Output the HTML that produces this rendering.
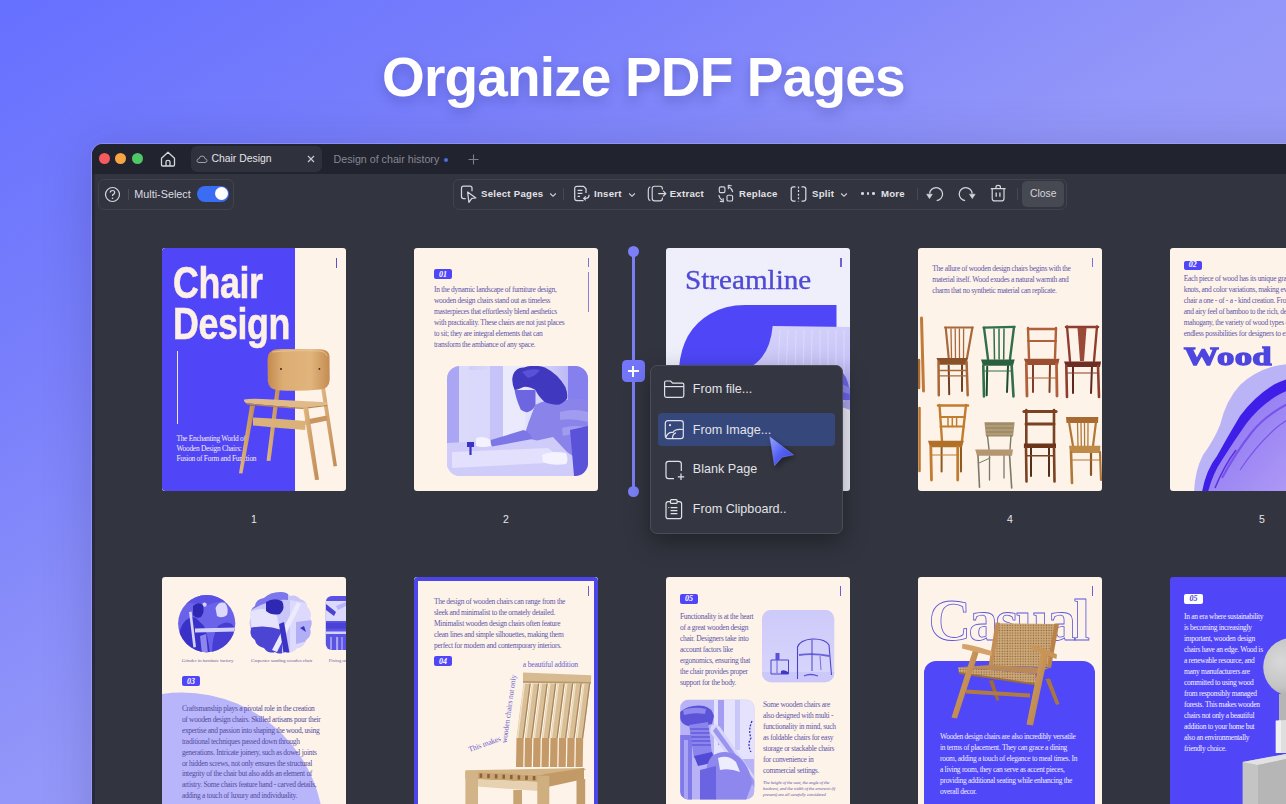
<!DOCTYPE html>
<html><head><meta charset="utf-8"><title>Organize PDF Pages</title>
<style>
html,body{margin:0;padding:0}
body{width:1286px;height:804px;overflow:hidden;position:relative;background:linear-gradient(to bottom right,#6670ff 0%,#7a80fb 25%,#9397f9 50%,#aaa6f0 100%);font-family:"Liberation Sans",sans-serif}
.t{position:absolute;white-space:nowrap}
</style></head><body>
<div class="t" style="left:382px;top:49.94px;font-size:55px;line-height:55px;color:#ffffff;font-weight:bold;font-family:'Liberation Sans',sans-serif;letter-spacing:-0.85px;text-shadow:0 5px 12px rgba(40,40,120,0.28);">Organize PDF Pages</div>
<div style="position:absolute;left:92px;top:143.6px;width:1250px;height:720px;border-radius:11px;background:#32343f;overflow:hidden;box-shadow:0 0 0 1px rgba(190,190,255,0.35), 0 6px 50px rgba(30,30,90,0.22)"><div style="position:absolute;left:0;top:0;width:100%;height:30.4px;background:#21232e"></div><div style="position:absolute;left:0;top:30.4px;width:2.5px;height:100%;background:#27293c"></div></div>
<div style="position:absolute;left:99.3px;top:153.2px;width:11px;height:11px;border-radius:50%;background:#f65a5c"></div>
<div style="position:absolute;left:115.3px;top:153.2px;width:11px;height:11px;border-radius:50%;background:#f6a545"></div>
<div style="position:absolute;left:131.5px;top:153.2px;width:11px;height:11px;border-radius:50%;background:#4fc766"></div>
<svg style="position:absolute;left:159px;top:150px" width="18" height="18" viewBox="0 0 18 18"><path d="M2.5 8.2 L9 2.3 L15.5 8.2 V14.8 Q15.5 16 14.3 16 H3.7 Q2.5 16 2.5 14.8 Z" fill="none" stroke="#d6d7dc" stroke-width="1.3" stroke-linejoin="round"/><path d="M7 16 V11.8 Q7 10.3 9 10.3 Q11 10.3 11 11.8 V16" fill="none" stroke="#d6d7dc" stroke-width="1.3"/></svg>
<div style="position:absolute;left:191px;top:146px;width:131px;height:26px;border-radius:6px;background:#2f313c"></div>
<svg style="position:absolute;left:196px;top:153px" width="12" height="12" viewBox="0 0 12 12"><path d="M3 9.5 H9 Q11 9.5 11 7.6 Q11 5.8 9.2 5.8 Q8.8 3 6 3 Q3.5 3 3.2 5.6 Q1 5.8 1 7.6 Q1 9.5 3 9.5 Z" fill="none" stroke="#9fa1aa" stroke-width="1"/></svg>
<div class="t" style="left:211.5px;top:154.40px;font-size:10.4px;line-height:10.4px;color:#e4e4e8;font-weight:normal;font-family:'Liberation Sans',sans-serif;">Chair Design</div>
<svg style="position:absolute;left:306px;top:154px" width="10" height="10" viewBox="0 0 10 10"><path d="M2 2 L8 8 M8 2 L2 8" stroke="#c9cad0" stroke-width="1.2"/></svg>
<div class="t" style="left:333.5px;top:154.14px;font-size:10.7px;line-height:10.7px;color:#868893;font-weight:normal;font-family:'Liberation Sans',sans-serif;">Design of chair history</div>
<div style="position:absolute;left:444px;top:157.5px;width:4px;height:4px;border-radius:50%;background:#4a6fe0"></div>
<svg style="position:absolute;left:467px;top:153px" width="13" height="13" viewBox="0 0 13 13"><path d="M6.5 1.5 V11.5 M1.5 6.5 H11.5" stroke="#7d7f89" stroke-width="1.1"/></svg>
<div style="position:absolute;left:97.5px;top:178.5px;width:136px;height:31px;border-radius:6px;border:1px solid #41434d;box-sizing:border-box;background:#32343f"></div>
<svg style="position:absolute;left:104px;top:185.5px" width="17" height="17" viewBox="0 0 17 17"><circle cx="8.5" cy="8.5" r="7" fill="none" stroke="#d6d7dc" stroke-width="1.2"/><path d="M6.3 6.6 Q6.3 4.5 8.5 4.5 Q10.7 4.5 10.7 6.5 Q10.7 7.8 9.3 8.4 Q8.5 8.8 8.5 10" fill="none" stroke="#d6d7dc" stroke-width="1.2"/><circle cx="8.5" cy="12.2" r="0.8" fill="#d6d7dc"/></svg>
<div style="position:absolute;left:128px;top:188.5px;width:1px;height:11px;background:#4a4c56"></div>
<div class="t" style="left:134.3px;top:188.76px;font-size:10.8px;line-height:10.8px;color:#dcdce0;font-weight:normal;font-family:'Liberation Sans',sans-serif;">Multi-Select</div>
<div style="position:absolute;left:197px;top:185.5px;width:31.5px;height:16.5px;border-radius:9px;background:#3a6cf4"></div>
<div style="position:absolute;left:214.8px;top:187.2px;width:13px;height:13px;border-radius:50%;background:#ffffff"></div>
<div style="position:absolute;left:452.7px;top:178.7px;width:614px;height:31px;border-radius:6px;border:1px solid #41434d;box-sizing:border-box;background:#32343f"></div>
<svg style="position:absolute;left:458px;top:184px" width="20" height="20" viewBox="0 0 20 20"><path d="M7.7 14.6 H5.5 Q3.5 14.6 3.5 12.6 V4 Q3.5 2 5.5 2 H12 Q14 2 14 4 V7.3" fill="none" stroke="#d6d7dc" stroke-width="1.25"/><path d="M9.6 8 L17.9 14 L13.8 14.4 L10.9 18.3 Z" fill="none" stroke="#d6d7dc" stroke-width="1.25" stroke-linejoin="round"/></svg>
<div class="t" style="left:481px;top:189.07px;font-size:9.6px;line-height:9.6px;color:#e2e2e6;font-weight:bold;font-family:'Liberation Sans',sans-serif;letter-spacing:0.26px;">Select Pages</div>
<svg style="position:absolute;left:548.5px;top:192px" width="8" height="6" viewBox="0 0 8 6"><path d="M1.2 1.5 L4 4.3 L6.8 1.5" fill="none" stroke="#d6d7dc" stroke-width="1.1"/></svg>
<div style="position:absolute;left:563px;top:188px;width:1px;height:12px;background:#464852"></div>
<svg style="position:absolute;left:572px;top:184px" width="20" height="20" viewBox="0 0 20 20"><path d="M11.5 16.6 H5 Q2.7 16.6 2.7 14.3 V4.6 Q2.7 2.3 5 2.3 H11.6 L14 4.8 V9" fill="none" stroke="#d6d7dc" stroke-width="1.25"/><path d="M5.6 6.4 H10.4 M5.6 9.4 H10.4 M5.6 12.4 H8" stroke="#d6d7dc" stroke-width="1.25"/><path d="M17 10.8 Q17.3 14.4 13.5 14.4 H12" fill="none" stroke="#d6d7dc" stroke-width="1.25"/><path d="M13.8 12.4 L11.7 14.4 L13.8 16.4" fill="none" stroke="#d6d7dc" stroke-width="1.25"/></svg>
<div class="t" style="left:594px;top:189.07px;font-size:9.6px;line-height:9.6px;color:#e2e2e6;font-weight:bold;font-family:'Liberation Sans',sans-serif;letter-spacing:0.26px;">Insert</div>
<svg style="position:absolute;left:627.5px;top:192px" width="8" height="6" viewBox="0 0 8 6"><path d="M1.2 1.5 L4 4.3 L6.8 1.5" fill="none" stroke="#d6d7dc" stroke-width="1.1"/></svg>
<svg style="position:absolute;left:0;top:0" width="1286" height="804" viewBox="0 0 1286 804"><path d="M650.3 186.8 Q648.3 187.6 648.3 190 V197.4 Q648.3 199.8 650.3 200.6" fill="none" stroke="#d6d7dc" stroke-width="1.15"/><path d="M662.4 189.6 V188.6 Q662.4 186.2 660 186.2 H654.6 Q652.2 186.2 652.2 188.6 V198.4 Q652.2 200.8 654.6 200.8 H660 Q662.4 200.8 662.4 198.4 V197.4" fill="none" stroke="#d6d7dc" stroke-width="1.15"/><path d="M658.6 193.6 H665.8 M663.4 191.2 L665.9 193.6 L663.4 196" fill="none" stroke="#d6d7dc" stroke-width="1.15" stroke-linecap="round" stroke-linejoin="round"/></svg>
<div class="t" style="left:669.7px;top:189.07px;font-size:9.6px;line-height:9.6px;color:#e2e2e6;font-weight:bold;font-family:'Liberation Sans',sans-serif;letter-spacing:0.26px;">Extract</div>
<svg style="position:absolute;left:0;top:0" width="1286" height="804" viewBox="0 0 1286 804"><rect x="719.3" y="186.8" width="5.6" height="5.8" rx="1.3" fill="none" stroke="#d6d7dc" stroke-width="1.15"/><rect x="727" y="195.2" width="5.6" height="5.8" rx="1.3" fill="none" stroke="#d6d7dc" stroke-width="1.15"/><path d="M732.8 192.2 Q732 188.6 728.8 186.8" fill="none" stroke="#d6d7dc" stroke-width="1.1"/><path d="M728.2 185.3 L728.4 188.6 M728.2 185.3 L731.3 185.8" fill="none" stroke="#d6d7dc" stroke-width="1.1" stroke-linecap="round"/><path d="M718.8 195 Q719.4 198.6 722.6 200.4" fill="none" stroke="#d6d7dc" stroke-width="1.1"/><path d="M723.4 201.8 L723.1 198.6 M723.4 201.8 L720.3 201.4" fill="none" stroke="#d6d7dc" stroke-width="1.1" stroke-linecap="round"/></svg>
<div class="t" style="left:739px;top:189.07px;font-size:9.6px;line-height:9.6px;color:#e2e2e6;font-weight:bold;font-family:'Liberation Sans',sans-serif;letter-spacing:0.26px;">Replace</div>
<svg style="position:absolute;left:789px;top:184px" width="20" height="20" viewBox="0 0 20 20"><path d="M6.5 2.8 H4.4 Q2.2 2.8 2.2 5 V14.8 Q2.2 17 4.4 17 H6.5" fill="none" stroke="#d6d7dc" stroke-width="1.25"/><path d="M12.5 2.8 H14.6 Q16.8 2.8 16.8 5 V14.8 Q16.8 17 14.6 17 H12.5" fill="none" stroke="#d6d7dc" stroke-width="1.25"/><path d="M9.5 2.5 V17.5" stroke="#d6d7dc" stroke-width="1.25" stroke-dasharray="2 1.6"/></svg>
<div class="t" style="left:812px;top:189.07px;font-size:9.6px;line-height:9.6px;color:#e2e2e6;font-weight:bold;font-family:'Liberation Sans',sans-serif;letter-spacing:0.26px;">Split</div>
<svg style="position:absolute;left:840px;top:192px" width="8" height="6" viewBox="0 0 8 6"><path d="M1.2 1.5 L4 4.3 L6.8 1.5" fill="none" stroke="#d6d7dc" stroke-width="1.1"/></svg>
<div style="position:absolute;left:861.2px;top:192.2px;width:2.6px;height:2.6px;border-radius:50%;background:#d6d7dc"></div>
<div style="position:absolute;left:866.7px;top:192.2px;width:2.6px;height:2.6px;border-radius:50%;background:#d6d7dc"></div>
<div style="position:absolute;left:872.2px;top:192.2px;width:2.6px;height:2.6px;border-radius:50%;background:#d6d7dc"></div>
<div class="t" style="left:881px;top:189.07px;font-size:9.6px;line-height:9.6px;color:#e2e2e6;font-weight:bold;font-family:'Liberation Sans',sans-serif;letter-spacing:0.26px;">More</div>
<div style="position:absolute;left:917px;top:188px;width:1px;height:12px;background:#464852"></div>
<svg style="position:absolute;left:0;top:0" width="1286" height="804" viewBox="0 0 1286 804"><path d="M936.7 200.6 A6.5 6.5 0 1 0 929.6 193.6" fill="none" stroke="#d6d7dc" stroke-width="1.25"/><path d="M926.7 194.2 L932.3 194.2 L929.5 198.6 Z" fill="#d6d7dc" stroke="#d6d7dc" stroke-width="0.6" stroke-linejoin="round"/><path d="M965.1 200.6 A6.5 6.5 0 1 1 972.2 193.6" fill="none" stroke="#d6d7dc" stroke-width="1.25"/><path d="M969.5 194.2 L975.1 194.2 L972.3 198.6 Z" fill="#d6d7dc" stroke="#d6d7dc" stroke-width="0.6" stroke-linejoin="round"/><path d="M990.8 188.6 H1005.6 M996 188.4 V187.2 Q996 185.4 998.2 185.4 Q1000.4 185.4 1000.4 187.2 V188.4" fill="none" stroke="#d6d7dc" stroke-width="1.2"/><path d="M992.2 189 V198.4 Q992.2 200.9 994.7 200.9 H1001.5 Q1004 200.9 1004 198.4 V189" fill="none" stroke="#d6d7dc" stroke-width="1.2"/><path d="M996.2 192.4 V196.8 M999.9 192.4 V196.8" stroke="#d6d7dc" stroke-width="1.3"/></svg>
<div style="position:absolute;left:1016.5px;top:188px;width:1px;height:12px;background:#464852"></div>
<div style="position:absolute;left:1022px;top:181px;width:42px;height:25.5px;border-radius:5px;background:#464852"></div>
<div class="t" style="left:1030px;top:188.50px;font-size:10.4px;line-height:10.4px;color:#d4d5da;font-weight:normal;font-family:'Liberation Sans',sans-serif;">Close</div>
<div style="position:absolute;left:162px;top:248px;width:184px;height:243px;border-radius:3px;background:#fdf3e8;overflow:hidden"></div>
<div style="position:absolute;left:414px;top:248px;width:184px;height:243px;border-radius:3px;background:#fdf3e8;overflow:hidden"></div>
<div style="position:absolute;left:666px;top:248px;width:184px;height:243px;border-radius:3px;background:#efeffb;overflow:hidden"></div>
<div style="position:absolute;left:918px;top:248px;width:184px;height:243px;border-radius:3px;background:#fdf3e8;overflow:hidden"></div>
<div style="position:absolute;left:1170px;top:248px;width:184px;height:243px;border-radius:3px;background:#fdf3e8;overflow:hidden"></div>
<div style="position:absolute;left:162px;top:577px;width:184px;height:263px;border-radius:3px;background:#fdf3e8"></div>
<div style="position:absolute;left:414px;top:577px;width:184px;height:263px;border-radius:3px;background:#fdf3e8"></div>
<div style="position:absolute;left:666px;top:577px;width:184px;height:263px;border-radius:3px;background:#fdf3e8"></div>
<div style="position:absolute;left:918px;top:577px;width:184px;height:263px;border-radius:3px;background:#fdf3e8"></div>
<div style="position:absolute;left:1170px;top:577px;width:184px;height:263px;border-radius:3px;background:#5046f8"></div>
<div style="position:absolute;left:414px;top:577px;width:184px;height:260px;border-radius:4px;border:4.3px solid #4b45ea;box-sizing:border-box"></div>
<div class="t" style="left:251px;top:514.31px;font-size:10.5px;line-height:10.5px;color:#e6e6ea;font-weight:normal;font-family:'Liberation Sans',sans-serif;width:6px;text-align:center;">1</div>
<div class="t" style="left:503px;top:514.31px;font-size:10.5px;line-height:10.5px;color:#e6e6ea;font-weight:normal;font-family:'Liberation Sans',sans-serif;width:6px;text-align:center;">2</div>
<div class="t" style="left:1007px;top:514.31px;font-size:10.5px;line-height:10.5px;color:#e6e6ea;font-weight:normal;font-family:'Liberation Sans',sans-serif;width:6px;text-align:center;">4</div>
<div class="t" style="left:1259px;top:514.31px;font-size:10.5px;line-height:10.5px;color:#e6e6ea;font-weight:normal;font-family:'Liberation Sans',sans-serif;width:6px;text-align:center;">5</div>
<div style="position:absolute;left:162px;top:248px;width:184px;height:243px;overflow:hidden;border-radius:3px"><div style="position:absolute;left:-162px;top:-248px;width:1286px;height:804px"><div style="position:absolute;left:162px;top:248px;width:133.3px;height:243px;border-radius:3px 0 0 3px;background:#5046f8"></div>
<div class="t" style="left:173.2px;top:260.11px;font-size:45px;line-height:45px;color:#fdf0e8;font-weight:bold;font-family:'Liberation Sans',sans-serif;letter-spacing:-0.5px;transform:scaleX(0.795);transform-origin:0 0;-webkit-text-stroke:0.6px #fdf0e8;">Chair</div>
<div class="t" style="left:173.2px;top:300.51px;font-size:45px;line-height:45px;color:#fdf0e8;font-weight:bold;font-family:'Liberation Sans',sans-serif;letter-spacing:-0.5px;transform:scaleX(0.795);transform-origin:0 0;-webkit-text-stroke:0.6px #fdf0e8;">Design</div>
<div style="position:absolute;left:335.8px;top:257.5px;width:1.4px;height:10px;background:#5a50d0"></div>
<div style="position:absolute;left:177px;top:350.6px;width:1.3px;height:73px;background:#f3e6dc"></div>
<div class="t" style="left:176.4px;top:435.10px;font-size:7.4px;line-height:7.4px;color:#f6ece6;font-weight:normal;font-family:'Liberation Serif',serif;letter-spacing:-0.25px;">The Enchanting World of</div>
<div class="t" style="left:176.4px;top:445.20px;font-size:7.4px;line-height:7.4px;color:#f6ece6;font-weight:normal;font-family:'Liberation Serif',serif;letter-spacing:-0.25px;">Wooden Design Chairs:</div>
<div class="t" style="left:176.4px;top:455.30px;font-size:7.4px;line-height:7.4px;color:#f6ece6;font-weight:normal;font-family:'Liberation Serif',serif;letter-spacing:-0.25px;">Fusion of Form and Function</div>
<svg style="position:absolute;left:0;top:0" width="1286" height="804" viewBox="0 0 1286 804">
<defs><linearGradient id="wd1" x1="0" y1="0" x2="1" y2="0"><stop offset="0" stop-color="#c4894e"/><stop offset="0.25" stop-color="#dcae74"/><stop offset="0.7" stop-color="#e0b47c"/><stop offset="1" stop-color="#c48c52"/></linearGradient>
<linearGradient id="lg1" x1="0" y1="0" x2="1" y2="0"><stop offset="0" stop-color="#e2b882"/><stop offset="1" stop-color="#bf8a54"/></linearGradient></defs>
<path d="M275.6 388.7 L280 388.5 L270.5 461 L266.6 460.8 Z" fill="url(#lg1)"/>
<path d="M321 387.8 L325 387.6 L337 466 L333.5 466.4 Z" fill="url(#lg1)"/>
<path d="M272 351 Q273 349 282 349 L320 349.3 Q329 349.5 329.5 356 L329.7 380 Q329 389 320 389.5 Q300 391.5 278 390.2 Q268.5 389.5 267.8 381 L267.5 360 Q267.8 352 272 351 Z" fill="url(#wd1)"/>
<path d="M272 352 Q290 350 320 351 Q326 352 327 356" fill="none" stroke="#ebc896" stroke-width="0.8"/>
<circle cx="281" cy="368.9" r="1" fill="#3b2a1a"/><circle cx="319.4" cy="368.9" r="0.9" fill="#3b2a1a"/>
<path d="M305 419.8 L327 415.6 L327.5 420.5 L305.5 425 Z" fill="#c99660"/>
<path d="M253 417.5 Q280 419 305.3 421 L305.3 430 Q280 428.5 253 425.5 Z" fill="#dbb17a"/>
<path d="M244 399.5 Q250 398.5 262 399 L327 402.2 L327 405 Q315 406 303.5 407.6 Q270 406 246 403 Q243.5 401.5 244 399.5 Z" fill="#e0ba88"/>
<path d="M246 403 Q270 406 303.5 407.6 L327 405 L327 406 Q315 407.5 303.5 409 Q270 407.5 247 404.5 Z" fill="#b98652"/>
<path d="M250 405.5 L255 405.8 L242.5 473.5 L239 473.2 Z" fill="url(#lg1)"/>
<path d="M303 406.5 L308 406.8 L319 479.8 L315 480 Z" fill="url(#lg1)"/>
</svg></div></div>
<div style="position:absolute;left:414px;top:248px;width:184px;height:243px;overflow:hidden;border-radius:3px"><div style="position:absolute;left:-414px;top:-248px;width:1286px;height:804px"><div style="position:absolute;left:434px;top:269.4px;width:18px;height:10px;border-radius:2px;background:#5046f8"></div><div class="t" style="left:438.0px;top:270.80px;font-size:8px;line-height:8px;color:#ffffff;font-weight:bold;font-family:'Liberation Serif',serif;width:10px;text-align:center;font-style:italic;">01</div>
<div class="t" style="left:434px;top:285.92px;font-size:7.5px;line-height:7.5px;color:#5f56a8;font-weight:normal;font-family:'Liberation Serif',serif;letter-spacing:-0.3px;">In the dynamic landscape of furniture design,</div>
<div class="t" style="left:434px;top:297.00px;font-size:7.5px;line-height:7.5px;color:#5f56a8;font-weight:normal;font-family:'Liberation Serif',serif;letter-spacing:-0.3px;">wooden design chairs stand out as timeless</div>
<div class="t" style="left:434px;top:308.08px;font-size:7.5px;line-height:7.5px;color:#5f56a8;font-weight:normal;font-family:'Liberation Serif',serif;letter-spacing:-0.3px;">masterpieces that effortlessly blend aesthetics</div>
<div class="t" style="left:434px;top:319.16px;font-size:7.5px;line-height:7.5px;color:#5f56a8;font-weight:normal;font-family:'Liberation Serif',serif;letter-spacing:-0.3px;">with practicality. These chairs are not just places</div>
<div class="t" style="left:434px;top:330.24px;font-size:7.5px;line-height:7.5px;color:#5f56a8;font-weight:normal;font-family:'Liberation Serif',serif;letter-spacing:-0.3px;">to sit; they are integral elements that can</div>
<div class="t" style="left:434px;top:341.32px;font-size:7.5px;line-height:7.5px;color:#5f56a8;font-weight:normal;font-family:'Liberation Serif',serif;letter-spacing:-0.3px;">transform the ambiance of any space.</div>
<div style="position:absolute;left:588.0px;top:257.5px;width:1.4px;height:9.5px;background:#7d72d8"></div>
<div style="position:absolute;left:588.0px;top:271.6px;width:1.4px;height:40px;background:#8a80dc"></div>
<svg style="position:absolute;left:0;top:0;pointer-events:none" width="1286" height="804" viewBox="0 0 1286 804"><defs><clipPath id="ph2"><rect x="447" y="366" width="141" height="110" rx="13"/></clipPath>
<linearGradient id="ph2bg" x1="0" y1="0" x2="1" y2="0"><stop offset="0" stop-color="#c8c5f8"/><stop offset="0.55" stop-color="#e6e5fc"/><stop offset="1" stop-color="#a9a5f3"/></linearGradient></defs><g clip-path="url(#ph2)">
<rect x="447" y="366" width="141" height="110" fill="url(#ph2bg)"/>
<rect x="447" y="366" width="12" height="80" fill="#aaa6f4"/>
<rect x="459" y="366" width="10" height="80" fill="#dcdafb"/>
<rect x="469" y="370" width="20" height="74" fill="#dad8fb"/>
<rect x="490" y="366" width="13" height="80" fill="#c6c3f8"/>
<rect x="503" y="366" width="22" height="76" fill="#ebeafd"/>
<rect x="568" y="366" width="20" height="38" fill="#8580ee"/>
<path d="M447 443 L588 436 L588 476 L447 476 Z" fill="#cfccf9"/>
<path d="M452 452 L548 448 L566 462 L452 468 Z" fill="#e2e0fc"/>
<path d="M467 442 h7 v5 h-2.4 v8 h-2.2 v-8 h-2.4 z" fill="#3a33c6"/>
<path d="M535.5 404.8 Q548 398 566 400 Q580 398 588 400 L588 466 Q576 458 567 452 L553 437 L537 440.6 L524 437.6 Q527 425 535.5 404.8 Z" fill="#8a84ea"/>
<path d="M560 412 Q574 408 588 412 L588 422 Q574 418 560 420 Z M562 428 Q576 424 588 428 L588 434 Q575 432 563 436 Z" fill="#a19cf0"/>
<path d="M570 430 L588 426 L588 476 L574 476 Q572 452 570 430 Z" fill="#5a52d8"/>
<path d="M489 440.6 L523.6 430 Q530 432 532.5 439 L492.2 446.6 Z" fill="#7d76e6"/>
<path d="M476 438 Q484 435 490.5 440 L491 446 Q483 448 476 446 Z" fill="#f3f2fe"/>
<path d="M542 455 Q552 450 566 453 Q569 460 566 464 Q552 466 543 462 Z" fill="#f3f2fe"/>
<path d="M514.6 389.9 Q516 399 520.6 409.3 Q524 413 528 412 Q534 410 535.5 404.8 L535.5 390 Z" fill="#6e66e0"/>
<path d="M513 375 Q516 367 524 367.5 Q534 364 545 367.5 Q558 374 565.4 387 Q568 394 566.9 398.8 Q562 405 556.4 404.8 Q548 404 544.5 401.8 Q538 396 535.5 390 Q528 386 523.6 387 Q517 390 514.6 389.9 Q511 382 513 375 Z" fill="#4038bf"/>
<path d="M522 372 Q530 368 540 370 Q536 376 528 378 Z" fill="#5a52d6"/>
</g></svg></div></div>
<div class="t" style="left:684.8px;top:267.01px;font-size:26.5px;line-height:26.5px;color:#4f49d4;font-weight:normal;font-family:'Liberation Serif',serif;letter-spacing:0px;transform:scaleX(1.1);transform-origin:0 0;-webkit-text-stroke:0.35px #4f49d4;">Streamline</div>
<div style="position:absolute;left:840.3px;top:257.5px;width:1.4px;height:9.5px;background:#6a62d6"></div>
<svg style="position:absolute;left:0;top:0;pointer-events:none" width="1286" height="804" viewBox="0 0 1286 804"><defs><clipPath id="p3"><rect x="666" y="248" width="184" height="243" rx="3"/></clipPath>
<linearGradient id="rib" x1="0" y1="0" x2="0.3" y2="1"><stop offset="0" stop-color="#d6d4fa"/><stop offset="0.6" stop-color="#c9c6f8"/><stop offset="1" stop-color="#b0abf3"/></linearGradient></defs><g clip-path="url(#p3)">
<path d="M679 368 Q682 330 710 314 Q725 305 745 305 L836.5 305 L836.5 420 L679 420 Z" fill="#4f47f7"/>
<path d="M772.7 326 L850 327 L850 410 Q820 400 790 384 Q770 372 752 366 Q770 355 772.7 326 Z" fill="url(#rib)"/>
<path d="M780 330 L778 370 M788 330 L786 374 M796 330 L795 378 M804 330 L803 382 M812 330 L811 386 M820 330 L820 390 M828 330 L828 394 M836 330 L836 398 M844 330 L844 402" stroke="#e2e0fc" stroke-width="1" opacity="0.7"/>
<path d="M842 372 Q850 380 850 400 L842 400 Z" fill="#6c66ee"/>
<path d="M842 384 L850 388 L850 394 L842 392 Z" fill="#8f8af2"/>
</g></svg>
<div style="position:absolute;left:918px;top:248px;width:184px;height:243px;overflow:hidden;border-radius:3px"><div style="position:absolute;left:-918px;top:-248px;width:1286px;height:804px"><div class="t" style="left:932.3px;top:265.42px;font-size:7.5px;line-height:7.5px;color:#5f56a8;font-weight:normal;font-family:'Liberation Serif',serif;letter-spacing:-0.3px;">The allure of wooden design chairs begins with the</div>
<div class="t" style="left:932.3px;top:276.32px;font-size:7.5px;line-height:7.5px;color:#5f56a8;font-weight:normal;font-family:'Liberation Serif',serif;letter-spacing:-0.3px;">material itself. Wood exudes a natural warmth and</div>
<div class="t" style="left:932.3px;top:287.22px;font-size:7.5px;line-height:7.5px;color:#5f56a8;font-weight:normal;font-family:'Liberation Serif',serif;letter-spacing:-0.3px;">charm that no synthetic material can replicate.</div>
<div style="position:absolute;left:1091.8999999999999px;top:257.5px;width:1.4px;height:9.5px;background:#7a6ee0"></div>
<svg style="position:absolute;left:0;top:0;pointer-events:none" width="1286" height="804" viewBox="0 0 1286 804"><defs><clipPath id="p4"><rect x="918" y="248" width="184" height="243" rx="3"/></clipPath></defs><g clip-path="url(#p4)"><line x1="921.5" y1="318" x2="923.5" y2="391" stroke="#c27a38" stroke-width="3" stroke-linecap="round"/><line x1="919" y1="360" x2="919" y2="388" stroke="#a86a30" stroke-width="2.5" stroke-linecap="round"/><line x1="919.5" y1="408" x2="919.5" y2="471" stroke="#b8742e" stroke-width="2.5" stroke-linecap="round"/><line x1="945.7" y1="327.5" x2="948.7" y2="358" stroke="#a8683a" stroke-width="2.2" stroke-linecap="round"/><line x1="972.4" y1="327.5" x2="967" y2="358" stroke="#a8683a" stroke-width="2.2" stroke-linecap="round"/><line x1="945" y1="327.5" x2="972.8" y2="327.5" stroke="#a8683a" stroke-width="2" stroke-linecap="round"/><line x1="951.0" y1="329" x2="951.5" y2="358" stroke="#a8683a" stroke-width="1.3" stroke-linecap="round"/><line x1="955.2" y1="329" x2="955.5" y2="358" stroke="#a8683a" stroke-width="1.3" stroke-linecap="round"/><line x1="959.4" y1="329" x2="959.5" y2="358" stroke="#a8683a" stroke-width="1.3" stroke-linecap="round"/><line x1="963.6" y1="329" x2="963.5" y2="358" stroke="#a8683a" stroke-width="1.3" stroke-linecap="round"/><line x1="948.7" y1="365.7" x2="949.2" y2="394.3" stroke="#6e4222" stroke-width="2" stroke-linecap="round"/><line x1="962" y1="365" x2="962" y2="391" stroke="#6e4222" stroke-width="2" stroke-linecap="round"/><polygon points="936.5,358 968,358 966,364.7 939,364.7" fill="#8a5028"/><line x1="938.5" y1="362" x2="938.8" y2="395.3" stroke="#a8683a" stroke-width="2.5" stroke-linecap="round"/><line x1="966.6" y1="362" x2="967.7" y2="395.3" stroke="#a8683a" stroke-width="2.5" stroke-linecap="round"/><line x1="939" y1="370.5" x2="966" y2="370.5" stroke="#a8683a" stroke-width="1.3" stroke-linecap="round"/><line x1="939" y1="375.8" x2="966" y2="375.8" stroke="#a8683a" stroke-width="1.3" stroke-linecap="round"/><line x1="984" y1="327.7" x2="988" y2="359" stroke="#2f7048" stroke-width="2.4" stroke-linecap="round"/><line x1="1014" y1="327" x2="1010" y2="359" stroke="#2f7048" stroke-width="2.4" stroke-linecap="round"/><line x1="983.5" y1="327.7" x2="1014.7" y2="326.8" stroke="#2f7048" stroke-width="2.2" stroke-linecap="round"/><line x1="994" y1="329" x2="994.5" y2="359" stroke="#2f7048" stroke-width="1.5" stroke-linecap="round"/><line x1="999" y1="329" x2="999.1" y2="359" stroke="#2f7048" stroke-width="1.5" stroke-linecap="round"/><line x1="1004" y1="329" x2="1003.7" y2="359" stroke="#2f7048" stroke-width="1.5" stroke-linecap="round"/><line x1="987.2" y1="366.8" x2="986.7" y2="395.3" stroke="#1f4a32" stroke-width="2" stroke-linecap="round"/><line x1="1008" y1="366" x2="1007" y2="392" stroke="#1f4a32" stroke-width="2" stroke-linecap="round"/><polygon points="981,359.4 1014.7,359.4 1013,365.7 983,365.7" fill="#2a6040"/><line x1="983.3" y1="365.7" x2="984" y2="396.4" stroke="#2f7048" stroke-width="2.6" stroke-linecap="round"/><line x1="1011.6" y1="364.7" x2="1013.5" y2="396.4" stroke="#2f7048" stroke-width="2.6" stroke-linecap="round"/><line x1="984" y1="371" x2="1012" y2="371" stroke="#2f7048" stroke-width="1.2" stroke-linecap="round"/><line x1="1028" y1="328" x2="1029" y2="358" stroke="#b2603a" stroke-width="2.4" stroke-linecap="round"/><line x1="1056" y1="328" x2="1055" y2="358" stroke="#b2603a" stroke-width="2.4" stroke-linecap="round"/><line x1="1028" y1="329" x2="1056" y2="329" stroke="#b2603a" stroke-width="2.5" stroke-linecap="round"/><line x1="1028" y1="341" x2="1056" y2="341" stroke="#b2603a" stroke-width="2.2" stroke-linecap="round"/><line x1="1033" y1="364" x2="1033" y2="392" stroke="#7e4026" stroke-width="2" stroke-linecap="round"/><line x1="1050" y1="364" x2="1049.5" y2="392" stroke="#7e4026" stroke-width="2" stroke-linecap="round"/><polygon points="1024,358.7 1059.5,358.7 1058,365 1026,365" fill="#9a5030"/><line x1="1026.3" y1="364" x2="1027" y2="396" stroke="#b2603a" stroke-width="2.8" stroke-linecap="round"/><line x1="1056.5" y1="364" x2="1057" y2="396" stroke="#b2603a" stroke-width="2.8" stroke-linecap="round"/><line x1="1027" y1="378" x2="1056" y2="378" stroke="#b2603a" stroke-width="1.2" stroke-linecap="round"/><line x1="1067" y1="326.5" x2="1070" y2="361" stroke="#8e3d2e" stroke-width="2.4" stroke-linecap="round"/><line x1="1097" y1="326.5" x2="1094" y2="361" stroke="#8e3d2e" stroke-width="2.4" stroke-linecap="round"/><line x1="1066" y1="327" x2="1098" y2="327" stroke="#8e3d2e" stroke-width="2.5" stroke-linecap="round"/><polygon points="1077.5,328 1086.5,328 1084,361 1080,361" fill="#9a4838"/><line x1="1073" y1="366" x2="1073" y2="393" stroke="#5e2820" stroke-width="2" stroke-linecap="round"/><line x1="1092" y1="366" x2="1091" y2="393" stroke="#5e2820" stroke-width="2" stroke-linecap="round"/><polygon points="1064,361.6 1101,361.6 1100,367 1066,367" fill="#6e2d22"/><line x1="1066.3" y1="366" x2="1067" y2="397" stroke="#8e3d2e" stroke-width="2.6" stroke-linecap="round"/><line x1="1098" y1="366" x2="1099" y2="397" stroke="#8e3d2e" stroke-width="2.6" stroke-linecap="round"/><line x1="1067" y1="373" x2="1098" y2="373" stroke="#8e3d2e" stroke-width="1.2" stroke-linecap="round"/><line x1="939.5" y1="405" x2="942" y2="441" stroke="#c27c30" stroke-width="2.4" stroke-linecap="round"/><line x1="966" y1="405" x2="962" y2="441" stroke="#c27c30" stroke-width="2.4" stroke-linecap="round"/><line x1="938" y1="405.5" x2="968" y2="405.5" stroke="#c27c30" stroke-width="2.5" stroke-linecap="round"/><line x1="940" y1="417" x2="965" y2="417" stroke="#c27c30" stroke-width="2" stroke-linecap="round"/><line x1="940.5" y1="426.5" x2="964" y2="426.5" stroke="#c27c30" stroke-width="2" stroke-linecap="round"/><line x1="948.0" y1="417" x2="948.0" y2="426.5" stroke="#c27c30" stroke-width="1.5" stroke-linecap="round"/><line x1="952.3" y1="417" x2="952.3" y2="426.5" stroke="#c27c30" stroke-width="1.5" stroke-linecap="round"/><line x1="956.6" y1="417" x2="956.6" y2="426.5" stroke="#c27c30" stroke-width="1.5" stroke-linecap="round"/><line x1="941.6" y1="447" x2="941.6" y2="471.5" stroke="#8e5a20" stroke-width="2" stroke-linecap="round"/><line x1="961" y1="447" x2="961" y2="471.5" stroke="#8e5a20" stroke-width="2" stroke-linecap="round"/><polygon points="928,440.8 963.8,440.8 962,447.2 930,447.2" fill="#b07028"/><line x1="930.8" y1="447" x2="931.5" y2="480" stroke="#c27c30" stroke-width="2.8" stroke-linecap="round"/><line x1="957.7" y1="447" x2="957.7" y2="480" stroke="#c27c30" stroke-width="2.8" stroke-linecap="round"/><line x1="932" y1="455" x2="958" y2="455" stroke="#c27c30" stroke-width="1.2" stroke-linecap="round"/><polygon points="984.5,422.2 1014.6,422.2 1013,436.5 986,436.5" fill="#a08c68"/><line x1="985" y1="426" x2="1014" y2="426" stroke="#c8b48e" stroke-width="0.8" stroke-linecap="round"/><line x1="985.5" y1="430" x2="1013.5" y2="430" stroke="#c8b48e" stroke-width="0.8" stroke-linecap="round"/><line x1="986" y1="434" x2="1013" y2="434" stroke="#c8b48e" stroke-width="0.8" stroke-linecap="round"/><line x1="987.5" y1="436" x2="989" y2="449.4" stroke="#7a7a66" stroke-width="1.4" stroke-linecap="round"/><line x1="1011" y1="436" x2="1010" y2="449.4" stroke="#7a7a66" stroke-width="1.4" stroke-linecap="round"/><line x1="989.5" y1="455.8" x2="989.5" y2="480" stroke="#7a7a66" stroke-width="1.3" stroke-linecap="round"/><line x1="1004" y1="455" x2="1004" y2="478" stroke="#7a7a66" stroke-width="1.3" stroke-linecap="round"/><polygon points="975.2,449.4 1013,449.4 1012,455.8 977,455.8" fill="#b49670"/><line x1="978" y1="455.8" x2="979.5" y2="487.3" stroke="#7a7a66" stroke-width="1.6" stroke-linecap="round"/><line x1="1009.6" y1="455.8" x2="1011.7" y2="488" stroke="#7a7a66" stroke-width="1.6" stroke-linecap="round"/><line x1="979" y1="463" x2="990" y2="458" stroke="#7a7a66" stroke-width="1" stroke-linecap="round"/><line x1="1026.3" y1="410" x2="1026.3" y2="443.6" stroke="#7a4222" stroke-width="2.6" stroke-linecap="round"/><line x1="1054" y1="410" x2="1054" y2="443.6" stroke="#7a4222" stroke-width="2.6" stroke-linecap="round"/><line x1="1024" y1="411.5" x2="1056" y2="411.5" stroke="#7a4222" stroke-width="3.2" stroke-linecap="round"/><line x1="1026" y1="424" x2="1054" y2="424" stroke="#7a4222" stroke-width="3" stroke-linecap="round"/><line x1="1031" y1="448" x2="1031" y2="476" stroke="#54301a" stroke-width="2" stroke-linecap="round"/><line x1="1049" y1="448" x2="1049" y2="476" stroke="#54301a" stroke-width="2" stroke-linecap="round"/><polygon points="1023.9,443.6 1056,443.6 1056,448 1023.9,448" fill="#6a3518"/><line x1="1026" y1="448" x2="1026.5" y2="481.5" stroke="#7a4222" stroke-width="2.6" stroke-linecap="round"/><line x1="1054" y1="448" x2="1054.5" y2="481.5" stroke="#7a4222" stroke-width="2.6" stroke-linecap="round"/><line x1="1026" y1="455.8" x2="1054" y2="455.8" stroke="#7a4222" stroke-width="1.5" stroke-linecap="round"/><polygon points="1066,417 1098.3,417 1098,423 1066.5,423" fill="#a86a30"/><line x1="1069" y1="422" x2="1073" y2="446" stroke="#b07838" stroke-width="2.2" stroke-linecap="round"/><line x1="1096" y1="422" x2="1093" y2="446" stroke="#b07838" stroke-width="2.2" stroke-linecap="round"/><line x1="1077.5" y1="423" x2="1078.0" y2="446" stroke="#b07838" stroke-width="1.3" stroke-linecap="round"/><line x1="1081.0" y1="423" x2="1081.3" y2="446" stroke="#b07838" stroke-width="1.3" stroke-linecap="round"/><line x1="1084.5" y1="423" x2="1084.6" y2="446" stroke="#b07838" stroke-width="1.3" stroke-linecap="round"/><line x1="1088.0" y1="423" x2="1087.9" y2="446" stroke="#b07838" stroke-width="1.3" stroke-linecap="round"/><line x1="1091" y1="452" x2="1091" y2="475" stroke="#885828" stroke-width="2.2" stroke-linecap="round"/><polygon points="1069,445.8 1100.4,445.8 1100,453 1070,453" fill="#c08a48"/><line x1="1071" y1="452" x2="1072" y2="483" stroke="#b07838" stroke-width="2.6" stroke-linecap="round"/><line x1="1100" y1="452" x2="1101" y2="480" stroke="#b07838" stroke-width="2.2" stroke-linecap="round"/><line x1="1072" y1="460" x2="1100" y2="460" stroke="#b07838" stroke-width="1" stroke-linecap="round"/></g></svg></div></div>
<div style="position:absolute;left:1170px;top:248px;width:184px;height:243px;overflow:hidden;border-radius:3px"><div style="position:absolute;left:-1170px;top:-248px;width:1286px;height:804px"><div style="position:absolute;left:1183.7px;top:260.5px;width:18px;height:9.5px;border-radius:2px;background:#5046f8"></div><div class="t" style="left:1187.7px;top:261.40px;font-size:8px;line-height:8px;color:#ffffff;font-weight:bold;font-family:'Liberation Serif',serif;width:10px;text-align:center;font-style:italic;">02</div>
<div class="t" style="left:1183.7px;top:275.22px;font-size:7.5px;line-height:7.5px;color:#5f56a8;font-weight:normal;font-family:'Liberation Serif',serif;letter-spacing:-0.3px;"> Each piece of wood has its unique grain patterns,</div>
<div class="t" style="left:1183.7px;top:286.27px;font-size:7.5px;line-height:7.5px;color:#5f56a8;font-weight:normal;font-family:'Liberation Serif',serif;letter-spacing:-0.3px;">knots, and color variations, making every wooden</div>
<div class="t" style="left:1183.7px;top:297.32px;font-size:7.5px;line-height:7.5px;color:#5f56a8;font-weight:normal;font-family:'Liberation Serif',serif;letter-spacing:-0.3px;">chair a one - of - a - kind creation. From the light</div>
<div class="t" style="left:1183.7px;top:308.37px;font-size:7.5px;line-height:7.5px;color:#5f56a8;font-weight:normal;font-family:'Liberation Serif',serif;letter-spacing:-0.3px;">and airy feel of bamboo to the rich, deep tones of</div>
<div class="t" style="left:1183.7px;top:319.42px;font-size:7.5px;line-height:7.5px;color:#5f56a8;font-weight:normal;font-family:'Liberation Serif',serif;letter-spacing:-0.3px;">mahogany, the variety of wood types offers</div>
<div class="t" style="left:1183.7px;top:330.47px;font-size:7.5px;line-height:7.5px;color:#5f56a8;font-weight:normal;font-family:'Liberation Serif',serif;letter-spacing:-0.3px;">endless possibilities for designers to explore.</div>
<div class="t" style="left:1183.5px;top:344.04px;font-size:25.5px;line-height:25.5px;color:#4d47e0;font-weight:bold;font-family:'Liberation Serif',serif;letter-spacing:0.2px;transform:scaleX(1.36);transform-origin:0 0;-webkit-text-stroke:1.3px #4d47e0;">Wood</div>
<svg style="position:absolute;left:0;top:0;pointer-events:none" width="1286" height="804" viewBox="0 0 1286 804"><defs><clipPath id="p5"><rect x="1170" y="248" width="184" height="243" rx="3"/></clipPath>
<linearGradient id="blob5" x1="0" y1="0" x2="1" y2="1"><stop offset="0" stop-color="#8f6ef2"/><stop offset="0.5" stop-color="#9c86f4"/><stop offset="1" stop-color="#b09cf6"/></linearGradient></defs><g clip-path="url(#p5)">
<path d="M1194 492 Q1195 470 1203 455 Q1214 440 1220 425 Q1226 400 1240 385 Q1255 371 1275 366 Q1290 363 1300 364 L1300 492 Z" fill="#bab4f7"/>
<path d="M1202 492 Q1206 470 1217 456 Q1228 436 1240 416 Q1255 396 1275 384 Q1290 377 1300 377 L1300 492 Z" fill="#3f1fe8"/>
<path d="M1208 492 Q1213 473 1222 460 Q1234 441 1246 424 Q1260 405 1280 394 Q1292 388 1300 388 L1300 492 Z" fill="url(#blob5)"/>
<path d="M1222 478 Q1236 452 1252 432 Q1268 412 1300 398" fill="none" stroke="#6a3ee6" stroke-width="2.2" opacity="0.7"/>
<path d="M1240 470 Q1256 446 1276 428 Q1288 418 1300 414" fill="none" stroke="#7a56e8" stroke-width="1.2"/>
<path d="M1215 488 Q1224 466 1236 450" fill="none" stroke="#5a30e0" stroke-width="1.5"/>
</g></svg></div></div>
<div style="position:absolute;left:162px;top:577px;width:184px;height:260px;overflow:hidden;border-radius:3px"><div style="position:absolute;left:-162px;top:-577px;width:1286px;height:804px"><svg style="position:absolute;left:0;top:0;pointer-events:none" width="1286" height="804" viewBox="0 0 1286 804"><defs><clipPath id="c61"><circle cx="206.7" cy="623.6" r="28.6"/></clipPath>
<clipPath id="c62"><path d="M280.5 592 Q287 592 290 596 Q296 594 300 599 Q307 601 307 607 Q312 612 310 618 Q313 623 310 629 Q312 636 306 640 Q304 647 297 648 Q292 654 285 652 Q280 655 275 652 Q268 654 264 648 Q256 646 255 640 Q249 636 251 629 Q248 623 251 617 Q249 610 255 606 Q256 599 264 598 Q270 592 280.5 592 Z"/></clipPath>
<clipPath id="c63"><rect x="325.8" y="596" width="40" height="54" rx="6"/></clipPath>
<clipPath id="p6"><rect x="162" y="577" width="184" height="260" rx="3"/></clipPath></defs><g clip-path="url(#c61)"><rect x="176" y="594" width="62" height="60" fill="#6a63ea"/>
<path d="M176 594 h62 v10 Q220 598 206 606 Q190 600 176 606 Z" fill="#5a52e4"/>
<circle cx="204.5" cy="604.6" r="2.2" fill="#d6d3fb"/>
<path d="M178 654 Q176 630 186 620 Q192 616 196 618 L204 626 Q208 636 210 654 Z" fill="#3a32c8"/>
<path d="M193 606 Q198 601 203 605 Q205 612 201 617 Q196 619 193 615 Z" fill="#2e27b0"/>
<path d="M212 654 Q212 636 218 626 Q226 620 232 624 Q238 632 238 654 Z" fill="#463ed2"/>
<path d="M215.5 608 Q219 601 225 603 Q229 608 227 615 Q222 619 217 616 Z" fill="#dcd9fc"/>
<path d="M189 612 L191.6 611.6 L196 647 L193.4 647.4 Z" fill="#d6d3fb"/>
<path d="M195 628.6 L236 627.6 L236 631.4 L195 632.6 Z" fill="#d3d0fa"/>
<path d="M200 636 L206 634 L208 654 L202 654 Z" fill="#8c86ee"/>
</g>
<g clip-path="url(#c62)"><rect x="248" y="590" width="66" height="66" fill="#c9c6f9"/>
<path d="M248 590 h40 v10 Q270 598 248 612 Z" fill="#7d77ee"/>
<path d="M290 600 L312 604 L312 656 L290 656 Z" fill="#dcd9fc"/>
<path d="M250 612 Q262 606 276 612 L280 630 Q268 634 252 632 Z" fill="#e6e4fd"/>
<path d="M250 628 Q266 624 282 630 L282 656 L250 656 Z" fill="#4c44d2"/>
<path d="M266 602 Q274 597 282 601 Q286 608 280 614 Q272 616 266 611 Z" fill="#2f28b2"/>
<path d="M272 650 L297 602 L301 604 L277 652 Z" fill="#ecebfd"/>
<path d="M279 624 L284 622 L290 656 L284 656 Z" fill="#3a32c4"/>
<path d="M296 622 L312 620 L312 640 L296 644 Z" fill="#b3aff6"/>
<path d="M300 628 L304 626 L306 632 Z" fill="#3a32c4"/>
</g>
<g clip-path="url(#c63)"><rect x="325" y="596" width="22" height="55" fill="#5a52e2"/>
<rect x="325.8" y="601" width="21" height="20" fill="#dcd9fc"/>
<path d="M326 604 L336 612 L334 616 L326 610 Z" fill="#4a42d0"/>
<path d="M336 606 L346 602 L346 606 L338 610 Z" fill="#b8b4f7"/>
<rect x="325.8" y="622.8" width="21" height="5.8" fill="#4a42d8"/>
<rect x="325.8" y="631.5" width="21" height="2.5" fill="#d6d3fb"/>
<rect x="330" y="637" width="2" height="13" fill="#9c97f2"/><rect x="336" y="637" width="2.2" height="13" fill="#a8a3f4"/><rect x="341" y="637" width="2" height="13" fill="#8f89f0"/>
</g>

<g clip-path="url(#p6)"><circle cx="181.8" cy="834.7" r="142.2" fill="#b9b5fb"/></g></svg>
<div class="t" style="left:181.8px;top:657.81px;font-size:5.0px;line-height:5.0px;color:#6f68a8;font-weight:normal;font-family:'Liberation Serif',serif;letter-spacing:-0.12px;">Grinder in furniture factory</div>
<div class="t" style="left:251px;top:657.81px;font-size:5.0px;line-height:5.0px;color:#6f68a8;font-weight:normal;font-family:'Liberation Serif',serif;letter-spacing:-0.12px;">Carpenter sanding wooden chair</div>
<div class="t" style="left:328.7px;top:657.81px;font-size:5.0px;line-height:5.0px;color:#6f68a8;font-weight:normal;font-family:'Liberation Serif',serif;letter-spacing:-0.12px;">Fixing on a chair</div>
<div style="position:absolute;left:182px;top:676.4px;width:18px;height:10px;border-radius:2px;background:#5046f8"></div><div class="t" style="left:186.0px;top:677.80px;font-size:8px;line-height:8px;color:#ffffff;font-weight:bold;font-family:'Liberation Serif',serif;width:10px;text-align:center;font-style:italic;">03</div>
<div class="t" style="left:181.9px;top:705.12px;font-size:7.5px;line-height:7.5px;color:#554c9c;font-weight:normal;font-family:'Liberation Serif',serif;letter-spacing:-0.3px;">Craftsmanship plays a pivotal role in the creation</div>
<div class="t" style="left:181.9px;top:716.01px;font-size:7.5px;line-height:7.5px;color:#554c9c;font-weight:normal;font-family:'Liberation Serif',serif;letter-spacing:-0.3px;">of wooden design chairs. Skilled artisans pour their</div>
<div class="t" style="left:181.9px;top:726.90px;font-size:7.5px;line-height:7.5px;color:#554c9c;font-weight:normal;font-family:'Liberation Serif',serif;letter-spacing:-0.3px;">expertise and passion into shaping the wood, using</div>
<div class="t" style="left:181.9px;top:737.79px;font-size:7.5px;line-height:7.5px;color:#554c9c;font-weight:normal;font-family:'Liberation Serif',serif;letter-spacing:-0.3px;">traditional techniques passed down through</div>
<div class="t" style="left:181.9px;top:748.68px;font-size:7.5px;line-height:7.5px;color:#554c9c;font-weight:normal;font-family:'Liberation Serif',serif;letter-spacing:-0.3px;">generations. Intricate joinery, such as dowel joints</div>
<div class="t" style="left:181.9px;top:759.57px;font-size:7.5px;line-height:7.5px;color:#554c9c;font-weight:normal;font-family:'Liberation Serif',serif;letter-spacing:-0.3px;">or hidden screws, not only ensures the structural</div>
<div class="t" style="left:181.9px;top:770.46px;font-size:7.5px;line-height:7.5px;color:#554c9c;font-weight:normal;font-family:'Liberation Serif',serif;letter-spacing:-0.3px;">integrity of the chair but also adds an element of</div>
<div class="t" style="left:181.9px;top:781.35px;font-size:7.5px;line-height:7.5px;color:#554c9c;font-weight:normal;font-family:'Liberation Serif',serif;letter-spacing:-0.3px;">artistry. Some chairs feature hand - carved details,</div>
<div class="t" style="left:181.9px;top:792.24px;font-size:7.5px;line-height:7.5px;color:#554c9c;font-weight:normal;font-family:'Liberation Serif',serif;letter-spacing:-0.3px;">adding a touch of luxury and individuality.</div></div></div>
<div style="position:absolute;left:418.3px;top:581.3px;width:175.4px;height:260px;overflow:hidden;border-radius:1px"><div style="position:absolute;left:-418.3px;top:-581.3px;width:1286px;height:804px"><div class="t" style="left:434px;top:598.22px;font-size:7.5px;line-height:7.5px;color:#5f56a8;font-weight:normal;font-family:'Liberation Serif',serif;letter-spacing:-0.3px;">The design of wooden chairs can range from the</div>
<div class="t" style="left:434px;top:609.27px;font-size:7.5px;line-height:7.5px;color:#5f56a8;font-weight:normal;font-family:'Liberation Serif',serif;letter-spacing:-0.3px;">sleek and minimalist to the ornately detailed.</div>
<div class="t" style="left:434px;top:620.32px;font-size:7.5px;line-height:7.5px;color:#5f56a8;font-weight:normal;font-family:'Liberation Serif',serif;letter-spacing:-0.3px;">Minimalist wooden design chairs often feature</div>
<div class="t" style="left:434px;top:631.37px;font-size:7.5px;line-height:7.5px;color:#5f56a8;font-weight:normal;font-family:'Liberation Serif',serif;letter-spacing:-0.3px;">clean lines and simple silhouettes, making them</div>
<div class="t" style="left:434px;top:642.42px;font-size:7.5px;line-height:7.5px;color:#5f56a8;font-weight:normal;font-family:'Liberation Serif',serif;letter-spacing:-0.3px;">perfect for modern and contemporary interiors.</div>
<div style="position:absolute;left:434px;top:656.3px;width:18px;height:10px;border-radius:2px;background:#5046f8"></div><div class="t" style="left:438.0px;top:657.70px;font-size:8px;line-height:8px;color:#ffffff;font-weight:bold;font-family:'Liberation Serif',serif;width:10px;text-align:center;font-style:italic;">04</div>
<div class="t" style="left:522.8px;top:660.74px;font-size:7.6px;line-height:7.6px;color:#6a5fd0;font-weight:normal;font-family:'Liberation Serif',serif;letter-spacing:-0.2px;">a beautiful addition</div>
<div style="position:absolute;left:588.0999999999999px;top:586px;width:1.4px;height:10px;background:#6a5fd8"></div>
<div class="t" style="left:470px;top:746.34px;font-size:7.6px;line-height:7.6px;color:#6a5fd0;font-weight:normal;font-family:'Liberation Serif',serif;letter-spacing:-0.1px;transform:rotate(-20deg);transform-origin:0 100%;">This makes</div>
<div class="t" style="left:508px;top:736.34px;font-size:7.6px;line-height:7.6px;color:#6a5fd0;font-weight:normal;font-family:'Liberation Serif',serif;letter-spacing:-0.1px;transform:rotate(-82deg);transform-origin:0 100%;">wooden chairs not only</div>
<svg style="position:absolute;left:0;top:0;pointer-events:none" width="1286" height="804" viewBox="0 0 1286 804"><defs><clipPath id="p7"><rect x="418.3" y="581.3" width="175.4" height="260"/></clipPath>
<linearGradient id="wd7" x1="0" y1="0" x2="0" y2="1"><stop offset="0" stop-color="#ddbf90"/><stop offset="1" stop-color="#c89c64"/></linearGradient></defs><g clip-path="url(#p7)">
<path d="M523 672.5 L591.2 675.3 L591 683.7 L523 682.7 Z" fill="#d6bb92"/>
<path d="M523 681 L591 682 L591 683.7 L523 682.7 Z" fill="#b89868"/>
<path d="M523.5 683.5 L530.7 683.5 L523.7 738 L516.5 738 Z" fill="#d9bf98"/><path d="M516.5 738 L523.7 738 L523.2 767 L516.0 767 Z" fill="#c49a68"/><path d="M523.8 683.5 L525.1 683.5 L518.1 738 L516.8 738 Z" fill="#f1e2c6"/><path d="M529.5 683.5 L530.7 683.5 L523.7 738 L522.5 738 Z" fill="#a88258"/><path d="M532.0 683.5 L539.2 683.5 L532.2 738 L525.0 738 Z" fill="#d9bf98"/><path d="M525.0 738 L532.2 738 L531.7 767 L524.5 767 Z" fill="#c49a68"/><path d="M532.3 683.5 L533.6 683.5 L526.6 738 L525.3 738 Z" fill="#f1e2c6"/><path d="M538.0 683.5 L539.2 683.5 L532.2 738 L531.0 738 Z" fill="#a88258"/><path d="M540.5 683.5 L547.7 683.5 L540.7 738 L533.5 738 Z" fill="#d9bf98"/><path d="M533.5 738 L540.7 738 L540.2 767 L533.0 767 Z" fill="#c49a68"/><path d="M540.8 683.5 L542.1 683.5 L535.1 738 L533.8 738 Z" fill="#f1e2c6"/><path d="M546.5 683.5 L547.7 683.5 L540.7 738 L539.5 738 Z" fill="#a88258"/><path d="M549.0 683.5 L556.2 683.5 L549.2 738 L542.0 738 Z" fill="#d9bf98"/><path d="M542.0 738 L549.2 738 L548.7 767 L541.5 767 Z" fill="#c49a68"/><path d="M549.3 683.5 L550.6 683.5 L543.6 738 L542.3 738 Z" fill="#f1e2c6"/><path d="M555.0 683.5 L556.2 683.5 L549.2 738 L548.0 738 Z" fill="#a88258"/><path d="M557.5 683.5 L564.7 683.5 L557.7 738 L550.5 738 Z" fill="#d9bf98"/><path d="M550.5 738 L557.7 738 L557.2 767 L550.0 767 Z" fill="#c49a68"/><path d="M557.8 683.5 L559.1 683.5 L552.1 738 L550.8 738 Z" fill="#f1e2c6"/><path d="M563.5 683.5 L564.7 683.5 L557.7 738 L556.5 738 Z" fill="#a88258"/><path d="M566.0 683.5 L573.2 683.5 L566.2 738 L559.0 738 Z" fill="#d9bf98"/><path d="M559.0 738 L566.2 738 L565.7 767 L558.5 767 Z" fill="#c49a68"/><path d="M566.3 683.5 L567.6 683.5 L560.6 738 L559.3 738 Z" fill="#f1e2c6"/><path d="M572.0 683.5 L573.2 683.5 L566.2 738 L565.0 738 Z" fill="#a88258"/><path d="M574.5 683.5 L581.7 683.5 L574.7 738 L567.5 738 Z" fill="#d9bf98"/><path d="M567.5 738 L574.7 738 L574.2 767 L567.0 767 Z" fill="#c49a68"/><path d="M574.8 683.5 L576.1 683.5 L569.1 738 L567.8 738 Z" fill="#f1e2c6"/><path d="M580.5 683.5 L581.7 683.5 L574.7 738 L573.5 738 Z" fill="#a88258"/><path d="M583.0 683.5 L590.2 683.5 L583.2 738 L576.0 738 Z" fill="#d9bf98"/><path d="M576.0 738 L583.2 738 L582.7 767 L575.5 767 Z" fill="#c49a68"/><path d="M583.3 683.5 L584.6 683.5 L577.6 738 L576.3 738 Z" fill="#f1e2c6"/><path d="M589.0 683.5 L590.2 683.5 L583.2 738 L582.0 738 Z" fill="#a88258"/><path d="M465.4 770.3 L584 768 L586 770 L538.4 775 L465.4 773 Z" fill="#d2b385"/>
<path d="M465.4 772 L538.4 775 L538.4 782 L465.4 779 Z" fill="#c9a474"/>
<rect x="472.0" y="773.2" width="2.6" height="4.2" fill="#8a6236"/><rect x="479.6" y="773.5500000000001" width="2.6" height="4.2" fill="#8a6236"/><rect x="487.2" y="773.9000000000001" width="2.6" height="4.2" fill="#8a6236"/><rect x="494.8" y="774.25" width="2.6" height="4.2" fill="#8a6236"/><rect x="502.4" y="774.6" width="2.6" height="4.2" fill="#8a6236"/><rect x="510.0" y="774.95" width="2.6" height="4.2" fill="#8a6236"/><rect x="517.6" y="775.3000000000001" width="2.6" height="4.2" fill="#8a6236"/><rect x="525.2" y="775.6500000000001" width="2.6" height="4.2" fill="#8a6236"/><rect x="532.8" y="776.0" width="2.6" height="4.2" fill="#8a6236"/><path d="M470 779 L538.4 782 L538.4 791 L470 786 Z" fill="#e6d2b0"/>
<path d="M538.4 775 L584 768 L584 779 L538.4 789 Z" fill="#c19a68"/>
<rect x="465.4" y="771.4" width="12.6" height="40" fill="#d3b488"/>
<rect x="513.3" y="790" width="8.7" height="20" fill="#c7a474"/>
<rect x="537.3" y="775.7" width="12" height="40" fill="#cfae80"/>
<rect x="576.5" y="779" width="8.7" height="30" fill="#c29c6a"/>
</g></svg></div></div>
<div style="position:absolute;left:666px;top:577px;width:184px;height:260px;overflow:hidden;border-radius:3px"><div style="position:absolute;left:-666px;top:-577px;width:1286px;height:804px"><div style="position:absolute;left:680px;top:594.4px;width:18px;height:9.6px;border-radius:2px;background:#5046f8"></div><div class="t" style="left:684.0px;top:595.40px;font-size:8px;line-height:8px;color:#ffffff;font-weight:bold;font-family:'Liberation Serif',serif;width:10px;text-align:center;font-style:italic;">05</div>
<div class="t" style="left:680px;top:612.72px;font-size:7.5px;line-height:7.5px;color:#5f56a8;font-weight:normal;font-family:'Liberation Serif',serif;letter-spacing:-0.3px;">Functionality is at the heart</div>
<div class="t" style="left:680px;top:623.69px;font-size:7.5px;line-height:7.5px;color:#5f56a8;font-weight:normal;font-family:'Liberation Serif',serif;letter-spacing:-0.3px;">of a great wooden design</div>
<div class="t" style="left:680px;top:634.66px;font-size:7.5px;line-height:7.5px;color:#5f56a8;font-weight:normal;font-family:'Liberation Serif',serif;letter-spacing:-0.3px;">chair. Designers take into</div>
<div class="t" style="left:680px;top:645.63px;font-size:7.5px;line-height:7.5px;color:#5f56a8;font-weight:normal;font-family:'Liberation Serif',serif;letter-spacing:-0.3px;">account factors like</div>
<div class="t" style="left:680px;top:656.60px;font-size:7.5px;line-height:7.5px;color:#5f56a8;font-weight:normal;font-family:'Liberation Serif',serif;letter-spacing:-0.3px;">ergonomics, ensuring that</div>
<div class="t" style="left:680px;top:667.57px;font-size:7.5px;line-height:7.5px;color:#5f56a8;font-weight:normal;font-family:'Liberation Serif',serif;letter-spacing:-0.3px;">the chair provides proper</div>
<div class="t" style="left:680px;top:678.54px;font-size:7.5px;line-height:7.5px;color:#5f56a8;font-weight:normal;font-family:'Liberation Serif',serif;letter-spacing:-0.3px;">support for the body.</div>
<div class="t" style="left:763px;top:701.02px;font-size:7.5px;line-height:7.5px;color:#5f56a8;font-weight:normal;font-family:'Liberation Serif',serif;letter-spacing:-0.3px;">Some wooden chairs are</div>
<div class="t" style="left:763px;top:712.08px;font-size:7.5px;line-height:7.5px;color:#5f56a8;font-weight:normal;font-family:'Liberation Serif',serif;letter-spacing:-0.3px;">also designed with multi -</div>
<div class="t" style="left:763px;top:723.14px;font-size:7.5px;line-height:7.5px;color:#5f56a8;font-weight:normal;font-family:'Liberation Serif',serif;letter-spacing:-0.3px;">functionality in mind, such</div>
<div class="t" style="left:763px;top:734.20px;font-size:7.5px;line-height:7.5px;color:#5f56a8;font-weight:normal;font-family:'Liberation Serif',serif;letter-spacing:-0.3px;">as foldable chairs for easy</div>
<div class="t" style="left:763px;top:745.26px;font-size:7.5px;line-height:7.5px;color:#5f56a8;font-weight:normal;font-family:'Liberation Serif',serif;letter-spacing:-0.3px;">storage or stackable chairs</div>
<div class="t" style="left:763px;top:756.32px;font-size:7.5px;line-height:7.5px;color:#5f56a8;font-weight:normal;font-family:'Liberation Serif',serif;letter-spacing:-0.3px;">for convenience in</div>
<div class="t" style="left:763px;top:767.38px;font-size:7.5px;line-height:7.5px;color:#5f56a8;font-weight:normal;font-family:'Liberation Serif',serif;letter-spacing:-0.3px;">commercial settings.</div>
<div class="t" style="left:763px;top:781.25px;font-size:4.6px;line-height:4.6px;color:#5f56a8;font-weight:normal;font-family:'Liberation Serif',serif;letter-spacing:-0.1px;font-style:italic;">The height of the seat, the angle of the</div>
<div class="t" style="left:763px;top:786.95px;font-size:4.6px;line-height:4.6px;color:#5f56a8;font-weight:normal;font-family:'Liberation Serif',serif;letter-spacing:-0.1px;font-style:italic;">backrest, and the width of the armrests (if</div>
<div class="t" style="left:763px;top:792.65px;font-size:4.6px;line-height:4.6px;color:#5f56a8;font-weight:normal;font-family:'Liberation Serif',serif;letter-spacing:-0.1px;font-style:italic;">present) are all carefully considered</div>
<div style="position:absolute;left:839.9px;top:586px;width:1.4px;height:9.5px;background:#6a5fd8"></div>
<svg style="position:absolute;left:0;top:0;pointer-events:none" width="1286" height="804" viewBox="0 0 1286 804"><defs><clipPath id="c81"><rect x="762" y="609.8" width="72.3" height="72.4" rx="9"/></clipPath>
<clipPath id="c82"><rect x="680.2" y="699.7" width="74.1" height="99.7" rx="8"/></clipPath>
<linearGradient id="g81" x1="0" y1="0" x2="0" y2="1"><stop offset="0" stop-color="#cdcafa"/><stop offset="1" stop-color="#d8d6fb"/></linearGradient></defs><g clip-path="url(#c81)"><rect x="762" y="610" width="73" height="73" fill="url(#g81)"/>
<rect x="762" y="672" width="73" height="11" fill="#ccc9fa"/>
<path d="M771 660 h17.5 v14 h-17.5 z" fill="none" stroke="#4a42cc" stroke-width="1"/>
<path d="M775.5 653 h4 v7 h-4 z" fill="#5a52d6"/>
<path d="M777 660 v13" stroke="#6a62dc" stroke-width="1"/>
<path d="M781 671 Q784 669 788 672 L788 674 L781 674 Z" fill="#3e36c4"/>
<path d="M797.5 679 L797.5 647 Q800 640 812 639 Q825 638.5 829 645 L831.5 675" fill="none" stroke="#4a42cc" stroke-width="1.1"/>
<path d="M799 655 Q814 653 829.5 656" stroke="#6a62dc" stroke-width="1.8" fill="none"/>
<path d="M812 639.5 L812 671" stroke="#4a42cc" stroke-width="1"/>
<path d="M820 656 L821 670" stroke="#6a62dc" stroke-width="0.9"/>
<path d="M804 676 Q810 673 818 676" stroke="#5a52d6" stroke-width="1.3" fill="none"/>
</g>
<g clip-path="url(#c82)"><rect x="680" y="699" width="75" height="101" fill="#b7b3f6"/>
<rect x="714" y="699" width="41" height="60" fill="#e4e2fc"/>
<rect x="718" y="700" width="6" height="45" fill="#a39ef2"/>
<rect x="735" y="700" width="5" height="50" fill="#c9c6f8"/>
<rect x="680" y="735" width="12" height="65" fill="#7f79ea"/>
<rect x="684" y="740" width="4" height="60" fill="#a9a4f4"/>
<path d="M680 712 Q690 704 704 706 Q712 708 714 716 L712 724 Q700 728 688 726 Q681 724 680 718 Z" fill="#5b53d8"/>
<path d="M683 710 Q694 706 706 709 L705 714 Q694 712 684 715 Z" fill="#8e88ee"/>
<path d="M689 725 L708 722 L712 754 L694 758 Z" fill="#8a84ec"/>
<path d="M690 729 h19 M690.5 733 h19 M691 737 h19 M691.5 741 h19 M692 745 h19" stroke="#4f47d2" stroke-width="1.2"/>
<path d="M694 756 L712 752 L716 762 L698 766 Z" fill="#524ad4"/>
<path d="M711 726 Q716 722 720 727 L757 780 L750 786 L710 732 Z" fill="#d8d5fb"/>
<path d="M716 727 L757 784 L755 788 L713 731 Z" fill="#9a95f0"/>
<path d="M712 756 Q724 748 738 756 Q750 766 752 784 L746 800 L716 800 Q704 790 708 776 Q704 766 712 756 Z" fill="#8d87ee"/>
<path d="M718 758 Q728 754 736 762 L740 772 Q730 768 720 770 Z" fill="#eeedfd"/>
<path d="M700 770 L716 766 L716 800 L700 800 Z" fill="#6a63e2"/>
<path d="M752 721 Q748 730 751 738 Q747 744 751 752" fill="none" stroke="#3a32c0" stroke-width="1.3" stroke-dasharray="2 1.4"/>
</g></svg></div></div>
<div style="position:absolute;left:918px;top:577px;width:184px;height:260px;overflow:hidden;border-radius:3px"><div style="position:absolute;left:-918px;top:-577px;width:1286px;height:804px"><div style="position:absolute;left:1091.8999999999999px;top:586px;width:1.4px;height:9.5px;background:#6a5fd8"></div>
<div class="t" style="left:928.5px;top:591.29px;font-size:59px;line-height:59px;color:transparent;font-weight:bold;font-family:'Liberation Serif',serif;letter-spacing:-2.5px;-webkit-text-stroke:0.8px #5b56dc;">Casual</div>
<div style="position:absolute;left:924.2px;top:661px;width:171px;height:170px;border-radius:12px;background:#4f47f8"></div>
<div class="t" style="left:940px;top:733.22px;font-size:7.5px;line-height:7.5px;color:#f4efff;font-weight:normal;font-family:'Liberation Serif',serif;letter-spacing:-0.3px;">Wooden design chairs are also incredibly versatile</div>
<div class="t" style="left:940px;top:744.21px;font-size:7.5px;line-height:7.5px;color:#f4efff;font-weight:normal;font-family:'Liberation Serif',serif;letter-spacing:-0.3px;">in terms of placement. They can grace a dining</div>
<div class="t" style="left:940px;top:755.20px;font-size:7.5px;line-height:7.5px;color:#f4efff;font-weight:normal;font-family:'Liberation Serif',serif;letter-spacing:-0.3px;">room, adding a touch of elegance to meal times. In</div>
<div class="t" style="left:940px;top:766.19px;font-size:7.5px;line-height:7.5px;color:#f4efff;font-weight:normal;font-family:'Liberation Serif',serif;letter-spacing:-0.3px;">a living room, they can serve as accent pieces,</div>
<div class="t" style="left:940px;top:777.18px;font-size:7.5px;line-height:7.5px;color:#f4efff;font-weight:normal;font-family:'Liberation Serif',serif;letter-spacing:-0.3px;">providing additional seating while enhancing the</div>
<div class="t" style="left:940px;top:788.17px;font-size:7.5px;line-height:7.5px;color:#f4efff;font-weight:normal;font-family:'Liberation Serif',serif;letter-spacing:-0.3px;">overall decor.</div>
<svg style="position:absolute;left:0;top:0;pointer-events:none" width="1286" height="804" viewBox="0 0 1286 804"><defs><pattern id="wick" width="2.6" height="2.6" patternUnits="userSpaceOnUse"><rect width="2.6" height="2.6" fill="#d2ad7c"/><rect x="0.6" y="0.6" width="1.3" height="1.3" fill="#8a6238"/></pattern>
<linearGradient id="wd9" x1="0" y1="0" x2="1" y2="1"><stop offset="0" stop-color="#d9a668"/><stop offset="1" stop-color="#b07a40"/></linearGradient></defs><path d="M997.5 623.2 L1056.4 624 L1049 667.2 L991.5 665.7 Z" fill="url(#wick)"/>
<path d="M995.5 622.5 L1000 622.8 L992.5 667 L988.5 666.5 Z" fill="#c48d55"/>
<path d="M1054.5 623.5 L1059 624 L1051 668 L1047 667.5 Z" fill="#b98248"/>
<path d="M989 680.7 L993 680 L999.5 700 L996.5 701 Z" fill="#a06a38"/>
<path d="M1045.5 679 L1050 678.5 L1059.5 704 L1056 705 Z" fill="#a97540"/>
<path d="M966 689.5 L1030 693.5 L1030 697.5 L966 693.5 Z" fill="#b07a44"/>
<path d="M958 667.2 L990 665 L1049 668 L1035.5 674 Z" fill="#b98a58"/>
<path d="M958 667.2 L1035.5 674 L1036 684.5 L959 672.5 Z" fill="url(#wick)"/>
<path d="M959 672 L1036 683.5 L1036 685.5 L959 674 Z" fill="#9c6c3c"/>
<path d="M973 650 L979 651.5 L957 718.5 L951.5 717.5 Z" fill="url(#wd9)"/>
<path d="M1041 653 L1048 654.5 L1033 725.5 L1026.5 724.5 Z" fill="url(#wd9)"/>
<path d="M962.4 644 Q966 643 992 651 L991.5 656 L962 648.5 Z" fill="#d4a26a"/>
<path d="M1032.5 645 Q1036 644.5 1057 654.5 L1056.4 659 L1032 649.5 Z" fill="#c99458"/></svg></div></div>
<div style="position:absolute;left:1170px;top:577px;width:184px;height:260px;overflow:hidden;border-radius:3px"><div style="position:absolute;left:-1170px;top:-577px;width:1286px;height:804px"><div style="position:absolute;left:1184.2px;top:594.4px;width:18.5px;height:9.6px;border-radius:2px;background:#ffffff"></div><div class="t" style="left:1188.45px;top:595.40px;font-size:8px;line-height:8px;color:#4a44d8;font-weight:bold;font-family:'Liberation Serif',serif;width:10px;text-align:center;font-style:italic;">05</div>
<div class="t" style="left:1184px;top:612.72px;font-size:7.5px;line-height:7.5px;color:#f6f2ff;font-weight:normal;font-family:'Liberation Serif',serif;letter-spacing:-0.3px;">In an era where sustainability</div>
<div class="t" style="left:1184px;top:623.71px;font-size:7.5px;line-height:7.5px;color:#f6f2ff;font-weight:normal;font-family:'Liberation Serif',serif;letter-spacing:-0.3px;">is becoming increasingly</div>
<div class="t" style="left:1184px;top:634.70px;font-size:7.5px;line-height:7.5px;color:#f6f2ff;font-weight:normal;font-family:'Liberation Serif',serif;letter-spacing:-0.3px;">important, wooden design</div>
<div class="t" style="left:1184px;top:645.69px;font-size:7.5px;line-height:7.5px;color:#f6f2ff;font-weight:normal;font-family:'Liberation Serif',serif;letter-spacing:-0.3px;">chairs have an edge. Wood is</div>
<div class="t" style="left:1184px;top:656.68px;font-size:7.5px;line-height:7.5px;color:#f6f2ff;font-weight:normal;font-family:'Liberation Serif',serif;letter-spacing:-0.3px;">a renewable resource, and</div>
<div class="t" style="left:1184px;top:667.67px;font-size:7.5px;line-height:7.5px;color:#f6f2ff;font-weight:normal;font-family:'Liberation Serif',serif;letter-spacing:-0.3px;">many manufacturers are</div>
<div class="t" style="left:1184px;top:678.66px;font-size:7.5px;line-height:7.5px;color:#f6f2ff;font-weight:normal;font-family:'Liberation Serif',serif;letter-spacing:-0.3px;">committed to using wood</div>
<div class="t" style="left:1184px;top:689.65px;font-size:7.5px;line-height:7.5px;color:#f6f2ff;font-weight:normal;font-family:'Liberation Serif',serif;letter-spacing:-0.3px;">from responsibly managed</div>
<div class="t" style="left:1184px;top:700.64px;font-size:7.5px;line-height:7.5px;color:#f6f2ff;font-weight:normal;font-family:'Liberation Serif',serif;letter-spacing:-0.3px;">forests. This makes wooden</div>
<div class="t" style="left:1184px;top:711.63px;font-size:7.5px;line-height:7.5px;color:#f6f2ff;font-weight:normal;font-family:'Liberation Serif',serif;letter-spacing:-0.3px;">chairs not only a beautiful</div>
<div class="t" style="left:1184px;top:722.62px;font-size:7.5px;line-height:7.5px;color:#f6f2ff;font-weight:normal;font-family:'Liberation Serif',serif;letter-spacing:-0.3px;">addition to your home but</div>
<div class="t" style="left:1184px;top:733.61px;font-size:7.5px;line-height:7.5px;color:#f6f2ff;font-weight:normal;font-family:'Liberation Serif',serif;letter-spacing:-0.3px;">also an environmentally</div>
<div class="t" style="left:1184px;top:744.60px;font-size:7.5px;line-height:7.5px;color:#f6f2ff;font-weight:normal;font-family:'Liberation Serif',serif;letter-spacing:-0.3px;">friendly choice.</div>
<svg style="position:absolute;left:0;top:0;pointer-events:none" width="1286" height="804" viewBox="0 0 1286 804"><defs><radialGradient id="sph" cx="0.3" cy="0.4" r="0.75"><stop offset="0" stop-color="#d9d9d9"/><stop offset="0.6" stop-color="#c4c4c4"/><stop offset="1" stop-color="#9a9a9a"/></radialGradient>
<linearGradient id="box1" x1="0" y1="0" x2="1" y2="0"><stop offset="0" stop-color="#bdbdbd"/><stop offset="1" stop-color="#e0e0e0"/></linearGradient></defs><circle cx="1292.5" cy="667" r="29.3" fill="url(#sph)"/>
<rect x="1279" y="694" width="12" height="28" fill="#b5b5b5"/>
<path d="M1275.8 720.7 L1300 719 L1300 753 L1275.8 753 Z" fill="#dedede"/>
<path d="M1275.8 720.7 L1281 720.2 L1281 753 L1275.8 753 Z" fill="#f0f0f0"/>
<path d="M1242.6 762 L1286 754 L1300 756 L1300 804 L1242.6 804 Z" fill="#c4c4c4"/>
<path d="M1242.6 762 L1286 754 L1300 756 L1258 765 Z" fill="#e2e2e2"/>
<path d="M1258 765 L1300 756 L1300 804 L1258 804 Z" fill="#b6b6b6"/></svg></div></div>
<div style="position:absolute;left:632px;top:251px;width:3px;height:240px;background:#7a7ef4"></div>
<div style="position:absolute;left:627.9px;top:245.5px;width:11px;height:11px;border-radius:50%;background:#7b7ff8"></div>
<div style="position:absolute;left:627.9px;top:485.5px;width:11px;height:11px;border-radius:50%;background:#7b7ff8"></div>
<div style="position:absolute;left:622px;top:360px;width:22.5px;height:22.3px;border-radius:4.5px;background:#7376f8"></div>
<div style="position:absolute;left:627.8px;top:370.1px;width:11px;height:2px;background:#ffffff"></div>
<div style="position:absolute;left:632.3px;top:365.6px;width:2px;height:11px;background:#ffffff"></div>
<div style="position:absolute;left:650px;top:365px;width:192.5px;height:169px;border-radius:7px;background:#343641;border:1px solid #4a4c56;box-sizing:border-box;box-shadow:0 8px 24px rgba(0,0,0,0.35)"></div>
<div style="position:absolute;left:658px;top:413.3px;width:177px;height:32.3px;border-radius:4px;background:#36477c"></div>
<svg style="position:absolute;left:662px;top:378px" width="24" height="22" viewBox="0 0 24 22"><path d="M2.6 17.6 V4.4 Q2.6 3 4 3 H8.6 L10.6 5.2 H20.4 Q21.8 5.2 21.8 6.6 V17.6 Q21.8 19.4 20 19.4 H4.4 Q2.6 19.4 2.6 17.6 Z" fill="none" stroke="#e2e3e8" stroke-width="1.2"/><path d="M2.6 8.6 H21.8" stroke="#e2e3e8" stroke-width="1.2"/></svg>
<div class="t" style="left:692.8px;top:382.93px;font-size:12.6px;line-height:12.6px;color:#e2e3e8;font-weight:normal;font-family:'Liberation Sans',sans-serif;">From file...</div>
<svg style="position:absolute;left:662px;top:418px" width="24" height="22" viewBox="0 0 24 22"><rect x="3.3" y="2.6" width="18" height="18" rx="2.6" fill="none" stroke="#e2e3e8" stroke-width="1.2"/><circle cx="8" cy="7.2" r="1.1" fill="#e2e3e8"/><path d="M3.8 19.5 Q6 13.5 11 14.5 Q12.5 10.5 21 11.5 M10.5 20 Q10.8 15.5 14 14.8" fill="none" stroke="#e2e3e8" stroke-width="1.2"/></svg>
<div class="t" style="left:692.8px;top:423.53px;font-size:12.6px;line-height:12.6px;color:#e2e3e8;font-weight:normal;font-family:'Liberation Sans',sans-serif;">From Image...</div>
<svg style="position:absolute;left:662px;top:458px" width="24" height="24" viewBox="0 0 24 24"><path d="M12 20.6 H6.5 Q4 20.6 4 18.1 V5.8 Q4 3.3 6.5 3.3 H16.8 Q19.3 3.3 19.3 5.8 V13" fill="none" stroke="#e2e3e8" stroke-width="1.2"/><path d="M19 15.5 V22 M15.8 18.8 H22.2" stroke="#e2e3e8" stroke-width="1.2"/></svg>
<div class="t" style="left:692.8px;top:463.33px;font-size:12.6px;line-height:12.6px;color:#e2e3e8;font-weight:normal;font-family:'Liberation Sans',sans-serif;">Blank Page</div>
<svg style="position:absolute;left:662px;top:497px" width="24" height="24" viewBox="0 0 24 24"><path d="M8.5 4.6 H6.2 Q4 4.6 4 6.8 V19.4 Q4 21.6 6.2 21.6 H17.4 Q19.6 21.6 19.6 19.4 V6.8 Q19.6 4.6 17.4 4.6 H15" fill="none" stroke="#e2e3e8" stroke-width="1.2"/><rect x="8.5" y="2.6" width="6.6" height="3.8" rx="1" fill="none" stroke="#e2e3e8" stroke-width="1.2"/><path d="M8.6 10.6 H15.4 M8.6 13.6 H15.4 M8.6 16.6 H15.4" stroke="#e2e3e8" stroke-width="1.2"/><circle cx="6.8" cy="10.6" r="0.6" fill="#e2e3e8"/></svg>
<div class="t" style="left:692.8px;top:503.33px;font-size:12.6px;line-height:12.6px;color:#e2e3e8;font-weight:normal;font-family:'Liberation Sans',sans-serif;">From Clipboard..</div>
<svg style="position:absolute;left:755px;top:425px" width="50" height="50" viewBox="0 0 50 50">
<defs><linearGradient id="cur" x1="0" y1="0" x2="1" y2="1"><stop offset="0" stop-color="#9aa4ff"/><stop offset="0.5" stop-color="#5360f4"/><stop offset="1" stop-color="#3d43d8"/></linearGradient>
<filter id="cs" x="-50%" y="-50%" width="200%" height="200%"><feGaussianBlur stdDeviation="3"/></filter></defs>
<path d="M16.5 14.5 L40.5 32 L29 34.5 L21.5 44 Z" fill="rgba(0,0,0,0.45)" filter="url(#cs)"/>
<path d="M14.8 11.8 L38.4 29.8 L27.2 32.2 L19.6 40.6 Z" fill="url(#cur)" stroke="#7f88ff" stroke-width="0.5" stroke-linejoin="round"/>
</svg>
</body></html>
